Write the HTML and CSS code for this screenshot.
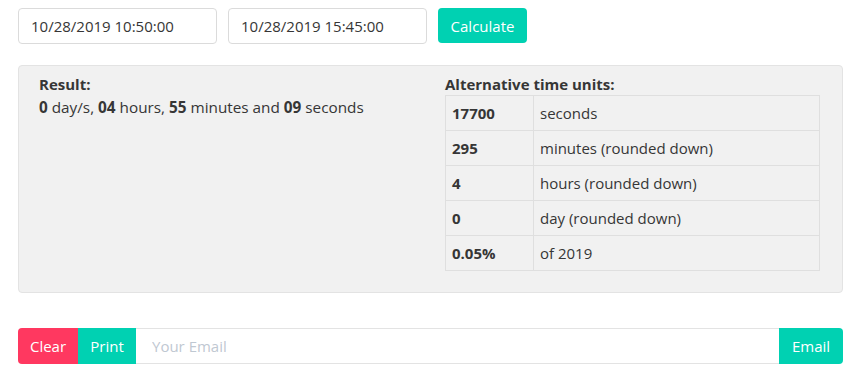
FILE: index.html
```html
<!DOCTYPE html>
<html>
<head>
<meta charset="utf-8">
<link rel="stylesheet" href="styles.css">
</head>
<body>
<div class="page">
  <div class="top-row">
    <input class="field date" type="text" value="10/28/2019 10:50:00">
    <input class="field date" type="text" value="10/28/2019 15:45:00">
    <button class="btn primary calc">Calculate</button>
  </div>

  <div class="panel">
    <div class="col-left">
      <div class="label">Result:</div>
      <div class="result"><b>0</b> day/s, <b>04</b> hours, <b>55</b> minutes and <b>09</b> seconds</div>
    </div>
    <div class="col-right">
      <div class="label">Alternative time units:</div>
      <table class="units">
        <tr><td class="num">17700</td><td>seconds</td></tr>
        <tr><td class="num">295</td><td>minutes (rounded down)</td></tr>
        <tr><td class="num">4</td><td>hours (rounded down)</td></tr>
        <tr><td class="num">0</td><td>day (rounded down)</td></tr>
        <tr><td class="num">0.05%</td><td>of 2019</td></tr>
      </table>
    </div>
  </div>

  <div class="bottom-row">
    <button class="btn danger left-end">Clear</button>
    <button class="btn primary mid">Print</button>
    <input class="email" type="text" placeholder="Your Email">
    <button class="btn primary right-end">Email</button>
  </div>
</div>
</body>
</html>
```
FILE: styles.css
```css
* { box-sizing: border-box; }
html, body { margin: 0; padding: 0; background: #fff; }
body {
  font-family: "Open Sans", "Noto Sans", "Liberation Sans", sans-serif;
  font-size: 15px;
  color: #363636;
}
.page { padding: 8px 8px 0 18px; }

.top-row {
  display: flex;
  gap: 11px;
  align-items: flex-start;
}
.field {
  width: 199px;
  height: 36px;
  border: 1px solid #dbdbdb;
  border-radius: 4px;
  padding: 0 12px;
  font: inherit;
  font-size: 15px;
  color: #363636;
  background: #fff;
  outline: none;
}
.btn {
  border: none;
  font: inherit;
  font-size: 15px;
  color: #fff;
  height: 35px;
  padding: 0 13px;
  cursor: pointer;
}
.primary { background: #00d1b2; }
.danger { background: #ff3860; }
.calc { width: 89px; border-radius: 4px; padding: 0; }

.panel {
  margin-top: 21px;
  height: 228px;
  background: #f1f1f1;
  border: 1px solid #e3e3e3;
  border-radius: 4px;
  padding: 7px 22px 21px 20px;
  display: grid;
  grid-template-columns: 1fr 375px;
}
.label { font-weight: 700; line-height: 22px; }
.result { line-height: 24px; font-size: 15.3px; }
.result b { font-weight: 700; }

.units {
  border-collapse: collapse;
  width: 375px;
}
.units td {
  border: 1px solid #dfdfdf;
  height: 35px;
  padding: 0 6px;
  font-size: 15px;
  line-height: 21px;
}
.units td.num { width: 88px; font-weight: 700; }

.bottom-row {
  margin-top: 35px;
  display: flex;
  height: 36px;
}
.bottom-row .btn { height: 36px; padding: 0; }
.left-end { border-radius: 4px 0 0 4px; width: 60px; }
.mid { width: 58px; }
.right-end { border-radius: 0 4px 4px 0; width: 64px; }
.email {
  flex: 1;
  height: 36px;
  border: none;
  border-top: 1px solid #e3e3e3;
  border-bottom: 1px solid #e3e3e3;
  padding: 0 16px;
  font: inherit;
  font-size: 15px;
  outline: none;
}
.email::placeholder { color: #bfc8d2; }
```
